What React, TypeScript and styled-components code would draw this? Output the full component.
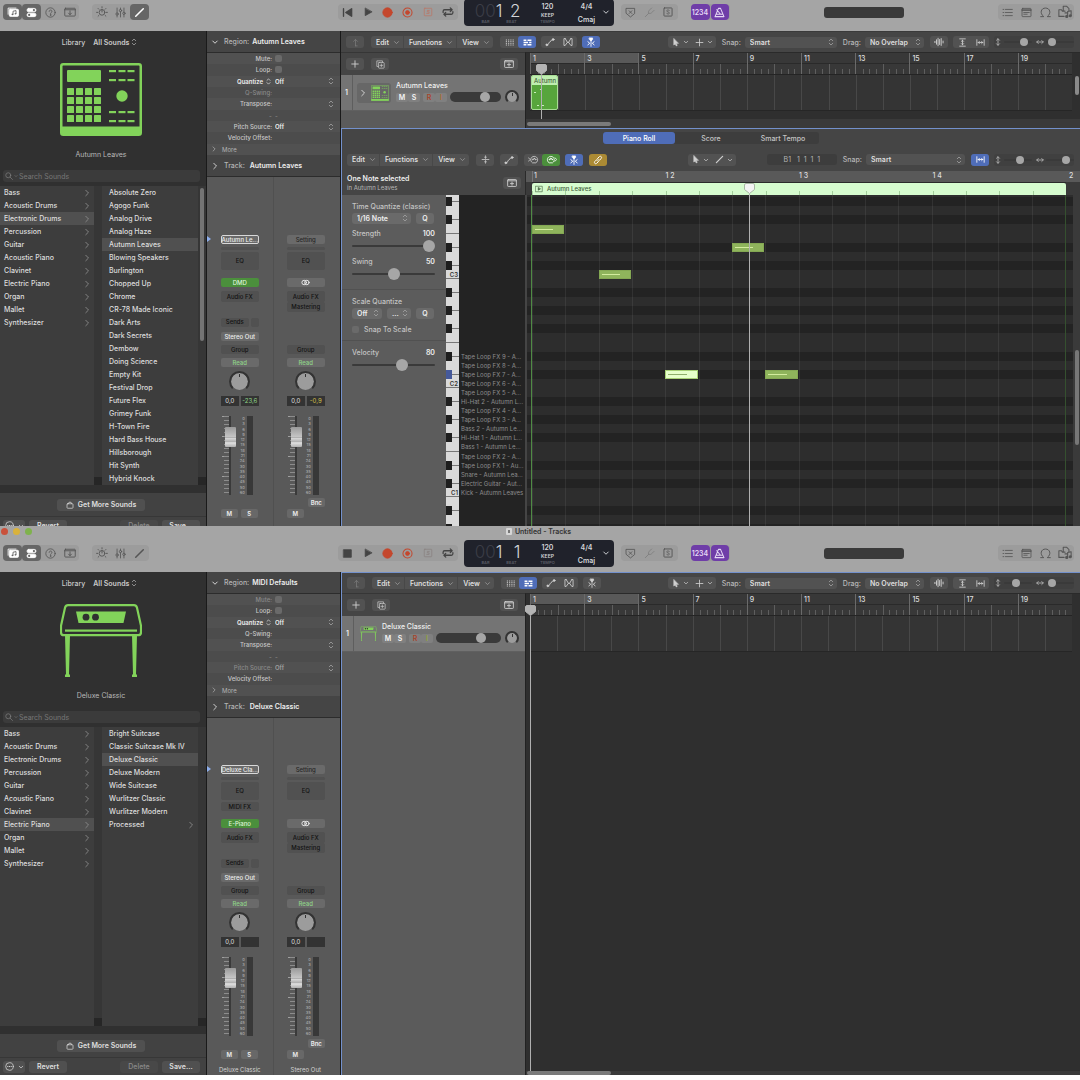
import React, { useId } from "react";
import type { ReactNode } from "react";
import styled, { createGlobalStyle, css } from "styled-components";

const c = {
  chrome: "#a5a5a5",
  chromeGroup: "#9c9c9c",
  ink: "#555",
  dark: "#303030",
  list: "#3d3d3d",
  bar: "#454545",
  control: "#525252",
  mixer: "#595959",
  text: "#dedede",
  muted: "#a8a8a8",
  blue: "#4f6db8",
  focus: "#7391cc",
  green: "#4b8f3c",
  lime: "#82d35a",
  purple: "#6f3da8",
};

const GlobalStyle = createGlobalStyle`
  *, *::before, *::after { box-sizing: border-box; }
  body { margin: 0; background: #fff; font-family: Inter, "Liberation Sans", sans-serif; font-size: 7px; line-height: 9px; color: ${c.text}; }
  button, input, select { font: inherit; color: inherit; margin: 0; padding: 0; border: 0; background: none; }
  button { display: flex; align-items: center; justify-content: center; white-space: nowrap; }
  ul { list-style: none; margin: 0; padding: 0; }
  h1, h2, p { margin: 0; font-size: inherit; font-weight: inherit; }
  svg { display: block; flex: none; }
`;

/* ---------- icons ---------- */

const glyphs: Record<string, ReactNode> = {
  library: (
    <>
      <path d="M1.5 11V2.8h10.5" />
      <rect x="3.2" y="4.4" width="12" height="9.4" rx="1" fill="currentColor" />
      <path d="M8 11.2V7l4-.9v4.2" stroke="#666" strokeWidth="1.2" />
      <circle cx="7.2" cy="11.2" r="1.1" fill="#666" stroke="none" />
      <circle cx="11.2" cy="10.4" r="1.1" fill="#666" stroke="none" />
    </>
  ),
  inspector: (
    <>
      <rect x="1.5" y="2" width="13" height="5" rx="2.5" fill="currentColor" />
      <rect x="1.5" y="9" width="13" height="5" rx="2.5" fill="currentColor" />
      <circle cx="11.5" cy="4.5" r="1.6" fill="#666" stroke="none" />
      <circle cx="4.6" cy="11.5" r="1.6" fill="#666" stroke="none" />
    </>
  ),
  help: (
    <>
      <circle cx="8" cy="8" r="6.8" />
      <path d="M6 6.4c0-2.8 4.1-2.6 4.1 0 0 1.6-2.1 1.5-2.1 3" />
      <circle cx="8" cy="11.6" r=".5" fill="currentColor" />
    </>
  ),
  tray: (
    <>
      <rect x="1" y="3" width="14" height="10.4" rx="1" />
      <path d="M1 5h14M8 6.5v5M6 9.5l2 2 2-2" />
    </>
  ),
  dial: (
    <>
      <circle cx="8" cy="8.5" r="3.8" />
      <path d="M8 8V5M8 1v1.5M2.8 3.3l1 1M13.2 3.3l-1 1M.8 8.5h1.5M13.7 8.5h1.5M2.8 13.6l1-1M13.2 13.6l-1-1" />
    </>
  ),
  mixer: (
    <>
      <path d="M3 1.5v7M3 12v2.5M8 1.5v2M8 7v7.5M13 1.5v6M13 11v3.5" />
      <circle cx="3" cy="10.2" r="1.7" />
      <circle cx="8" cy="5.2" r="1.7" />
      <circle cx="13" cy="9.2" r="1.7" />
    </>
  ),
  pencil: <path d="M2.5 13.5 13.5 2.5" strokeWidth="2.2" />,
  start: (
    <g fill="currentColor">
      <path d="M14 2.5v11L5.5 8zM2.2 2.5v11" strokeWidth="2" />
    </g>
  ),
  stop: <rect x="2.5" y="2.5" width="11" height="11" fill="currentColor" />,
  play: <path d="M3.5 2.2v11.6L14 8z" fill="currentColor" />,
  record: <circle cx="8" cy="8" r="6.8" fill="currentColor" />,
  capture: (
    <>
      <circle cx="8" cy="8" r="6.6" strokeWidth="1.5" />
      <circle cx="8" cy="8" r="2.8" fill="currentColor" />
    </>
  ),
  replace: (
    <>
      <rect x="2" y="2" width="12" height="12" rx="1" />
      <path d="M10 5.5H7v2.3h2.7v2.5H6" />
    </>
  ),
  cycle: (
    <g strokeWidth="1.7">
      <path d="M1.5 8.5V7q0-2 2-2h10M11 2.5l2.5 2.5L11 7.5M14.5 7.5V9q0 2-2 2h-10M5 8.5 2.5 11 5 13.5" />
    </g>
  ),
  shield: (
    <>
      <path d="M2 2h12v7.5L8 14.5 2 9.5z" />
      <path d="M6 5.5l4 4M10 5.5l-4 4" />
    </>
  ),
  fork: <path d="M2 14l5-5M7 9c-1.5-2 0-3.5 2-5.5l2-2M7 9c2 1.5 3.5 0 5.5-2l2-2" />,
  solo: (
    <>
      <rect x="1.5" y="1.5" width="13" height="13" rx="1" strokeWidth="1.5" />
      <path d="M10.3 5.8c-.5-1.6-4.4-1.6-4.4.5 0 2 4.4 1.2 4.4 3.3 0 2.1-4 2.2-4.6.4" />
    </>
  ),
  metronome: (
    <g strokeWidth="1.5">
      <path d="M6.5 2h3L14.5 14h-13zM4 10.5h8.5M9.500 10.500 4 4" />
    </g>
  ),
  list: <path d="M5 3.5h10M5 8h10M5 12.5h10M1.5 3.5h1.2M1.5 8h1.2M1.5 12.5h1.2" />,
  note: (
    <>
      <rect x="1.5" y="2" width="13" height="12" rx="1" />
      <path d="M1.5 4h13M1.5 5h13M4 8h8M4 10.5h5" />
    </>
  ),
  loop: <path d="M1 14h4.5C-1 9 1.5 1.5 8 1.5S17 9 10.5 14H15" strokeWidth="1.4" />,
  browser: (
    <>
      <path d="M1 13V5.5h3l1 1.5h3M1 13h6M6 6V1.5h4L12.5 4v2.5M8 9h3" />
      <path d="M11 13V7.5l4-1V12" />
      <circle cx="10" cy="13" r="1.2" fill="currentColor" />
      <circle cx="14" cy="12.3" r="1.2" fill="currentColor" />
    </>
  ),
  up: <path d="M8 14V3M4.5 6 8 2.5 11.5 6M8 14h3" />,
  down: <path d="M3.5 6 8 10.5 12.5 6" strokeWidth="1.9" />,
  right: <path d="M5.5 2.5 11 8l-5.5 5.5" strokeWidth="1.8" />,
  updown: <path d="M4.5 5.5 8 2l3.500 3.500M4.500 10.500 8 14l3.500-3.500" strokeWidth="1.5" />,
  grid: (
    <path
      d="M1.5 3.5h2M5.5 3.5h2M9.5 3.5h2M13.5 3.5h2M1.5 6.5h2M5.5 6.5h2M9.5 6.5h2M13.5 6.5h2M1.5 9.5h2M5.5 9.5h2M9.5 9.5h2M13.5 9.5h2M1.5 12.5h2M5.5 12.5h2M9.5 12.5h2M13.5 12.5h2"
      strokeLinecap="butt"
      strokeWidth="1.7"
    />
  ),
  rows: <path d="M1 4h5M8 4h7M1 8h8M11 8h4M1 12h5M8 12h7" strokeWidth="2.4" strokeLinecap="butt" />,
  automation: (
    <>
      <path d="M2 12.5c5 0 3-3 6-5s2-3.5 6-3.5" strokeWidth="1.6" />
      <circle cx="3" cy="12.5" r="1.5" fill="currentColor" />
      <circle cx="13" cy="4" r="1.5" fill="currentColor" />
    </>
  ),
  flex: <path d="M3.5 2.5h-2v11h2l3.5-5-3.5-6M12.5 2.5h2v11h-2L9 8.5l3.5-6M7 8.5h2" strokeWidth="1.4" />,
  catch: (
    <>
      <path d="M8 5v10" strokeWidth="1.4" />
      <path d="M5.5 1.5h5V4L8 6.5 5.5 4z" fill="currentColor" />
      <path d="M3 7.5 6 10l-3 2.5M13 7.5 10 10l3 2.5" strokeWidth="1.5" />
    </>
  ),
  pointer: <path d="M5 1.5v11l2.5-2.3L9.2 14l1.8-.8L9.3 9.5h3.4z" fill="currentColor" />,
  marquee: <path d="M8 2v4M8 10v4M2 8h4M10 8h4M7 8h2M8 7v2" strokeWidth="1.5" />,
  wave: <path d="M1.5 7v2M4 4.5v7M6.5 2v12M9 4v8M11.5 2.5v11M14.5 6.5v3" strokeWidth="1.5" />,
  vzoom: <path d="M3 1.5h10M3 14.5h10M8 4v8M6 6l2-2 2 2M6 10l2 2 2-2" strokeWidth="1.5" />,
  hzoom: <path d="M1.5 3v10M14.5 3v10M4 8h8M6 6 4 8l2 2M10 6l2 2-2 2" strokeWidth="1.5" />,
  vert: <path d="M8 1.5v13M5 4.5l3-3 3 3M5 11.5l3 3 3-3" strokeWidth="1.8" />,
  horiz: <path d="M1.5 8h13M4.5 5l-3 3 3 3M11.5 5l3 3-3 3" strokeWidth="1.8" />,
  plus: <path d="M8 1.5v13M1.5 8h13" strokeWidth="1.8" />,
  duplicate: (
    <>
      <path d="M4 11.5H1.5v-10h10V4" />
      <rect x="4.5" y="4.5" width="10" height="10" rx="1" />
      <path d="M9.5 7v5M7 9.5h5" />
    </>
  ),
  panel: (
    <>
      <rect x="1" y="2.5" width="14" height="11" rx="1" strokeWidth="1.4" />
      <path d="M1 4.5h14M8 6.5v5M5.5 9h5" strokeWidth="1.4" />
    </>
  ),
  collapse: <path d="M2 8h12M8 1.5v4M6.3 4 8 5.5 9.7 4M8 14.5v-4M6.3 12 8 10.5 9.7 12" strokeWidth="1.4" />,
  midiIn: (
    <>
      <path d="M.8 5.5 3 8 .8 10.5M6 12.5c-4-3-2-9 3-9s7 6 3 9z" />
      <circle cx="7" cy="8" r=".6" />
      <circle cx="9" cy="6.5" r=".6" />
      <circle cx="11" cy="8" r=".6" />
    </>
  ),
  midiOut: (
    <>
      <path d="M13.2 5.5 15.4 8l-2.2 2.5M4 12.5c-4-3-2-9 3-9s7 6 3 9z" />
      <circle cx="5" cy="8" r=".6" />
      <circle cx="7" cy="6.5" r=".6" />
      <circle cx="9" cy="8" r=".6" />
    </>
  ),
  link: (
    <g strokeWidth="1.6">
      <path d="M7 9.5c-1.2-1.2-1.2-2.5 0-3.7l3-3c2.2-2.2 5.2.8 3 3l-1.5 1.5" />
      <path d="M9 6.5c1.2 1.2 1.2 2.5 0 3.7l-3 3c-2.2 2.2-5.2-.8-3-3l1.5-1.5" />
    </g>
  ),
  stereo: (
    <>
      <circle cx="5.6" cy="8" r="4" strokeWidth="1.6" />
      <circle cx="10.4" cy="8" r="4" strokeWidth="1.6" />
    </>
  ),
  search: (
    <>
      <circle cx="6.5" cy="6.5" r="5" />
      <path d="M10.3 10.3 15 15" />
    </>
  ),
  bag: (
    <>
      <rect x="2" y="5.5" width="12" height="9" rx="1.5" strokeWidth="1.4" />
      <path d="M4.5 5.5l1.5-3h4l1.5 3" strokeWidth="1.4" />
    </>
  ),
  more: (
    <>
      <circle cx="8" cy="8" r="6.8" strokeWidth="1.3" />
      <path d="M4.8 8h.4M7.8 8h.4M10.8 8h.4" strokeWidth="1.8" />
    </>
  ),
  region: (
    <>
      <rect x="1.5" y="2.5" width="13" height="11" />
      <path d="M6.5 5.5v5l4-2.5z" fill="currentColor" />
    </>
  ),
};

const Icon = ({ name, size = 10 }: { name: string; size?: number }) => (
  <svg
    width={size}
    height={size}
    viewBox="0 0 16 16"
    fill="none"
    stroke="currentColor"
    strokeWidth="1.2"
    strokeLinecap="round"
    strokeLinejoin="round"
    aria-hidden="true"
  >
    {glyphs[name]}
  </svg>
);

const DrumMachine = ({ width, height }: { width: number; height: number }) => (
  <svg width={width} height={height} viewBox="0 0 82 73" fill={c.lime} aria-hidden="true">
    <rect x="1.25" y="1.25" width="79.5" height="70.5" rx="2" fill="none" stroke={c.lime} strokeWidth="2.5" />
    <rect x="1" y="63.5" width="80" height="8.5" />
    <rect x="7" y="7" width="34" height="12" rx="1" />
    {[0, 1, 2, 3].map((r) =>
      [0, 1, 2, 3].map((k) => <rect key={`${r}${k}`} x={7 + k * 9} y={25 + r * 9} width="7" height="7" rx=".6" />)
    )}
    {[7, 16, 48, 57].map((y) => [49, 58.5, 67.5].map((x) => <rect key={`${x}-${y}`} x={x} y={y} width="7" height="2.2" />))}
    <circle cx="62" cy="33" r="5.7" />
  </svg>
);

const StagePiano = ({ width, height }: { width: number; height: number }) => (
  <svg width={width} height={height} viewBox="0 0 82 73" fill={c.lime} aria-hidden="true">
    <path
      d="M8 1.2h66c2 0 2.5 1 3 2.5l4 18v6.5c0 2-1 3-3 3H4c-2 0-3-1-3-3v-6.5l4-18C5.5 2.2 6 1.2 8 1.2z"
      fill="none"
      stroke={c.lime}
      strokeWidth="2.2"
    />
    <path d="M16 7.5h50L63.5 19h-45z" />
    <rect x="5" y="25.5" width="72" height="2.2" />
    <circle cx="26" cy="13.2" r="3.4" fill={c.dark} />
    <circle cx="35.5" cy="13.2" r="3.4" fill={c.dark} />
    <path d="M5 31h5l-1 39.5h1V73H5v-2.5h1zM72 31h5l-1 39.5h1V73h-5v-2.5h1z" />
  </svg>
);

/* ---------- window chrome ---------- */

const Page = styled.main`
  display: flex;
  flex-direction: column;
`;

const WindowFrame = styled.section<{ $front?: boolean }>`
  position: relative;
  isolation: isolate;
  background: ${c.chrome};
  overflow: hidden;
  ${(p) =>
    p.$front &&
    css`
      margin-top: -8px;
    `}
`;

const TitleBar = styled.header`
  display: grid;
  grid-template-columns: 1fr auto 1fr;
  align-items: center;
  height: 15px;
  padding: 0 4px 4px 1px;
  color: #333;
  font-weight: 600;
`;

const Lights = styled.div`
  display: flex;
  gap: 5px;
`;

const Light = styled.button<{ $color: string }>`
  width: 7px;
  height: 7px;
  border-radius: 50%;
  background: ${(p) => p.$color};
`;

const WindowTitle = styled.h1`
  display: flex;
  align-items: center;
  gap: 3px;
`;

const DocIcon = styled.span`
  width: 6px;
  height: 7px;
  border: 2px solid #d6d6d6;
  border-radius: 1px;
  background: #777;
`;

const MainBar = styled.div`
  display: flex;
  align-items: center;
  height: 31px;
  padding: 0 6px 7px 3px;
  color: ${c.ink};
`;

const Spring = styled.span<{ $grow: number }>`
  flex: ${(p) => p.$grow} 1 0;
`;

const ToolGroup = styled.div<{ $ml?: number }>`
  display: flex;
  margin-left: ${(p) => p.$ml ?? 0}px;
  border-radius: 4px;
  background: ${c.chromeGroup};
`;

const ToolButton = styled.button<{ $on?: boolean; $w?: number; $color?: string }>`
  width: ${(p) => p.$w ?? 19}px;
  height: 16px;
  border-radius: 4px;
  color: ${(p) => (p.$on ? "#fff" : p.$color ?? "inherit")};
  background: ${(p) => (p.$on ? "#666" : "transparent")};
`;

const PurpleButton = styled(ToolButton)`
  color: #e6d8f5;
  background: ${c.purple};
  font-weight: 600;
  margin-right: 1px;
`;

const Lcd = styled.div`
  display: grid;
  grid-template-columns: 34px 18px 54px 24px 15px;
  flex: none;
  height: 27px;
  margin: 0 7px 0 6px;
  padding-left: 5px;
  border-radius: 4px;
  background: #20222b;
  color: #d4d6da;
  text-align: center;
`;

const LcdCell = styled.div`
  display: flex;
  flex-direction: column;
  justify-content: space-between;
  padding: 3px 0 2px;
  font-weight: 600;
`;

const LcdDigits = styled.span`
  font-size: 17px;
  line-height: 18px;
  font-weight: 300;
  text-align: right;
`;

const LcdDim = styled.span`
  color: #3b3d46;
`;

const LcdKeep = styled.span`
  font-size: 5px;
  line-height: 6px;
`;

const LcdLabel = styled.span`
  color: #5a5c66;
  font-size: 4px;
  line-height: 4px;
`;

const LcdSelect = styled.button`
  color: #d4d6da;
`;

const LevelBar = styled.div`
  width: 80px;
  height: 11px;
  border-radius: 3px;
  background: #3a3a3a;
`;

const Body = styled.div`
  display: grid;
  grid-template-columns: 207px 134px 1fr;
  background: ${c.dark};
`;

/* ---------- shared controls ---------- */

const SelectBox = styled.span<{ $w?: number; $bare?: boolean; $pad?: number; $h?: number }>`
  display: inline-grid;
  grid-template-columns: 1fr;
  align-items: center;
  width: ${(p) => (p.$w ? `${p.$w}px` : "auto")};
  height: ${(p) => p.$h ?? 11}px;
  border-radius: 3px;
  background: ${(p) => (p.$bare ? "transparent" : c.control)};
  > * {
    grid-area: 1 / 1;
  }
  > svg {
    justify-self: end;
    margin-right: 2px;
    pointer-events: none;
    color: ${c.muted};
  }
  > select {
    appearance: none;
    width: 100%;
    padding-left: ${(p) => p.$pad ?? 5}px;
    font-weight: 600;
    outline: none;
  }
`;

type PickProps = { id?: string; label?: string; value: string; w?: number; bare?: boolean; pad?: number; h?: number };
const Pick = ({ id, label, value, w, bare, pad, h }: PickProps) => (
  <SelectBox $w={w} $bare={bare} $pad={pad} $h={h}>
    <select id={id} aria-label={label} defaultValue={value}>
      <option>{value}</option>
    </select>
    <Icon name="updown" size={8} />
  </SelectBox>
);

const Range = styled.input.attrs({ type: "range" })<{ $thumb: number; $line?: number }>`
  appearance: none;
  display: block;
  width: 100%;
  height: ${(p) => p.$thumb}px;
  outline: none;
  &::-webkit-slider-runnable-track {
    height: ${(p) => p.$line ?? 2}px;
    border-radius: 5px;
    background: #3a3a3a;
  }
  &::-webkit-slider-thumb {
    appearance: none;
    width: ${(p) => p.$thumb}px;
    height: ${(p) => p.$thumb}px;
    margin-top: ${(p) => ((p.$line ?? 2) - p.$thumb) / 2}px;
    border-radius: 50%;
    background: #a6a6a6;
  }
`;

const KnobRing = styled.button<{ $size: number }>`
  position: relative;
  width: ${(p) => p.$size}px;
  height: ${(p) => p.$size}px;
  border-radius: 50%;
  border: 2px solid #333;
  border-bottom-color: transparent;
  background: #9c9c9c;
  background-clip: padding-box;
  align-items: flex-start;
  &::before {
    content: "";
    width: 1px;
    height: 3px;
    margin-top: 1px;
    background: #333;
  }
`;

/* ---------- library ---------- */

const LibraryPane = styled.aside`
  display: flex;
  flex-direction: column;
  border-right: 1px solid #1a1a1a;
  background: ${c.dark};
`;

const LibraryHead = styled.div`
  display: flex;
  align-items: center;
  justify-content: center;
  gap: 4px;
  height: 22px;
  padding-right: 4px;
  font-weight: 500;
  color: #cacaca;
`;

const Artwork = styled.div`
  display: flex;
  flex-direction: column;
  align-items: center;
  justify-content: space-between;
  height: 117px;
  padding: 10px 4px 11px 0;
  color: #b8b8b8;
`;

const SearchBox = styled.label`
  display: flex;
  align-items: center;
  gap: 1px;
  height: 12px;
  margin: 0 6px 4px 3px;
  padding-left: 2px;
  border-radius: 3px;
  background: #3b3b3b;
  color: #8a8a8a;
  > input {
    flex: 1;
    min-width: 0;
    outline: none;
    &::placeholder {
      color: #777;
      opacity: 1;
    }
  }
`;

const Columns = styled.div`
  display: grid;
  grid-template-columns: 94px 8px 1fr 8px;
  height: 299px;
`;

const ListColumn = styled.ul`
  background: ${c.list};
`;

const ScrollRail = styled.div`
  display: flex;
  flex-direction: column;
  justify-content: space-between;
  background: #363636;
  border-bottom: 8px solid #262626;
`;

const RailThumb = styled.span<{ $h: number }>`
  width: 4px;
  height: ${(p) => p.$h}px;
  margin: 2px auto 0;
  border-radius: 2px;
  background: #747474;
`;

const ListItem = styled.button<{ $on?: boolean; $pad: number }>`
  justify-content: space-between;
  width: 100%;
  height: 13px;
  padding: 0 3px 0 ${(p) => p.$pad}px;
  font-weight: 500;
  background: ${(p) => (p.$on ? "#505050" : "transparent")};
  > svg {
    color: #8a8a8a;
  }
`;

const StoreRow = styled.div`
  display: flex;
  align-items: center;
  justify-content: center;
  height: 24px;
  margin-top: 8px;
  padding-right: 4px;
  border-bottom: 1px solid #373737;
  background: #424242;
`;

const PanelButton = styled.button<{ $w?: number; $ml?: string }>`
  gap: 4px;
  width: ${(p) => (p.$w ? `${p.$w}px` : "auto")};
  height: 12px;
  margin-left: ${(p) => p.$ml ?? "0"};
  padding: 0 2px;
  border-radius: 3px;
  background: #505050;
  font-weight: 600;
  &:disabled {
    background: #484848;
    color: #8a8a8a;
    font-weight: 500;
  }
`;

const LibraryFoot = styled.div`
  display: flex;
  align-items: center;
  gap: 4px;
  height: 17px;
  padding: 0 6px 0 3px;
  background: #424242;
`;

const categories = [
  "Bass",
  "Acoustic Drums",
  "Electronic Drums",
  "Percussion",
  "Guitar",
  "Acoustic Piano",
  "Clavinet",
  "Electric Piano",
  "Organ",
  "Mallet",
  "Synthesizer",
];

type LibraryProps = { art: ReactNode; patch: string; category: string; patches: string[]; folder?: string; thumb?: number };
const Library = ({ art, patch, category, patches, folder, thumb }: LibraryProps) => (
  <LibraryPane>
    <LibraryHead>
      Library
      <Pick label="Sound filter" value="All Sounds" w={51} bare pad={4} />
    </LibraryHead>
    <Artwork>
      {art}
      <p>{patch}</p>
    </Artwork>
    <SearchBox>
      <Icon name="search" size={8} />
      <Icon name="down" size={4} />
      <input type="search" placeholder="Search Sounds" aria-label="Search Sounds" />
    </SearchBox>
    <Columns>
      <ListColumn>
        {categories.map((name) => (
          <li key={name}>
            <ListItem $pad={4} $on={name === category}>
              {name}
              <Icon name="right" size={8} />
            </ListItem>
          </li>
        ))}
      </ListColumn>
      <ScrollRail />
      <ListColumn>
        {patches.map((name) => (
          <li key={name}>
            <ListItem $pad={7} $on={name === patch}>
              {name}
              {name === folder && <Icon name="right" size={8} />}
            </ListItem>
          </li>
        ))}
      </ListColumn>
      <ScrollRail>{thumb && <RailThumb $h={thumb} />}</ScrollRail>
    </Columns>
    <StoreRow>
      <PanelButton $w={88}>
        <Icon name="bag" size={8} />
        Get More Sounds
      </PanelButton>
    </StoreRow>
    <LibraryFoot>
      <PanelButton $w={22} aria-label="Library actions">
        <Icon name="more" size={9} />
        <Icon name="down" size={6} />
      </PanelButton>
      <PanelButton $w={38}>Revert</PanelButton>
      <PanelButton $w={38} $ml="auto" disabled>
        Delete
      </PanelButton>
      <PanelButton $w={38}>Save...</PanelButton>
    </LibraryFoot>
  </LibraryPane>
);

/* ---------- inspector and channel strips ---------- */

const InspectorPane = styled.aside`
  display: flex;
  flex-direction: column;
  border-right: 1px solid #1a1a1a;
  background: ${c.mixer};
`;

const SectionHead = styled.h2`
  display: flex;
  align-items: center;
  gap: 5px;
  height: 22px;
  padding-left: 4px;
  border-bottom: 1px solid #2c2c2c;
  background: ${c.bar};
  color: #b4b4b4;
  font-weight: 500;
  > svg {
    color: #dcdcdc;
  }
`;

const Strong = styled.span`
  color: #ededed;
  font-weight: 600;
  margin-left: -2px;
`;

const Params = styled.div`
  display: grid;
  grid-auto-rows: 1fr;
  height: 102px;
  background: #515151;
  font-size: 6px;
`;

const Param = styled.div<{ $dim?: boolean; $bold?: boolean }>`
  display: grid;
  grid-template-columns: 65px 1fr;
  gap: 3px;
  align-items: center;
  padding-right: 3px;
  color: ${(p) => (p.$dim ? "#8a8a8a" : p.$bold ? "#f0f0f0" : "#c9c9c9")};
  font-weight: ${(p) => (p.$bold ? 600 : 500)};
  &:nth-child(even) {
    background: #4c4c4c;
  }
  > label {
    display: flex;
    justify-content: flex-end;
    align-items: center;
    gap: 2px;
  }
  select {
    color: ${(p) => (p.$dim ? "#a0a0a0" : "#f0f0f0")};
  }
`;

const Tick = styled.input.attrs({ type: "checkbox" })`
  appearance: none;
  width: 7px;
  height: 7px;
  border-radius: 2px;
  background: #6a6a6a;
`;

const Field = styled.input`
  width: 100%;
  outline: none;
`;

const MoreToggle = styled.button`
  gap: 5px;
  justify-content: flex-start;
  padding-left: 4px;
  color: #b4b4b4;
`;

const Dots = styled.span`
  grid-column: 1 / -1;
  padding-left: 62px;
  color: #888;
`;

type ParamRow = { label: string; kind: "check" | "pick" | "text" | "stepper"; dim?: boolean; bold?: boolean };
const ParamLine = ({ row }: { row: ParamRow }) => {
  const id = useId();
  return (
    <Param $dim={row.dim} $bold={row.bold}>
      <label htmlFor={id}>
        {row.label}
        {row.bold && <Icon name="updown" size={7} />}
      </label>
      {row.kind === "check" && <Tick id={id} />}
      {row.kind === "pick" && <Pick id={id} value="Off" bare pad={0} h={10} />}
      {row.kind === "text" && <Field id={id} />}
      {row.kind === "stepper" && (
        <SelectBox $bare $pad={0} $h={10}>
          <Field id={id} />
          <Icon name="updown" size={8} />
        </SelectBox>
      )}
    </Param>
  );
};

const Strips = styled.div`
  display: grid;
  grid-template-columns: 1fr 1fr;
  flex: 1;
  padding-right: 2px;
  font-size: 6px;
`;

const Strip = styled.div`
  position: relative;
  display: flex;
  flex-direction: column;
  align-items: center;
  justify-content: flex-end;
  & + & {
    border-left: 1px solid #505050;
  }
`;

const FocusMark = styled.span<{ $top: number }>`
  position: absolute;
  left: 0;
  top: ${(p) => p.$top}px;
  border: 3px solid transparent;
  border-left: 4px solid #8fb0ee;
  border-right: 0;
`;

const slotTones = {
  plain: css`
    background: #6a6a6a;
    color: #262626;
  `,
  light: css`
    background: #6a6a6a;
    color: #eee;
  `,
  active: css`
    border: 1px solid #d8d8d8;
    background: #6a6a6a;
    color: #eee;
  `,
  empty: css`
    background: #515151;
    color: #121212;
  `,
  green: css`
    background: ${c.green};
    color: #dff3d8;
  `,
  read: css`
    background: #6a6a6a;
    color: #8fd389;
  `,
};

const Slot = styled.button<{ $tone: keyof typeof slotTones; $gap: number; $h?: number; $w?: number; $hide?: boolean }>`
  flex: none;
  width: ${(p) => p.$w ?? 38}px;
  height: ${(p) => p.$h ?? 9}px;
  margin-top: ${(p) => p.$gap}px;
  border-radius: 2px;
  line-height: 8px;
  font-weight: 500;
  ${(p) => slotTones[p.$tone]}
  ${(p) => p.$hide && "visibility: hidden;"}
`;

const EffectSlots = styled.div`
  display: flex;
  flex-direction: column;
  height: 26px;
  margin-top: 4px;
`;

const StripRow = styled.div<{ $gap: number; $h: number; $end?: boolean }>`
  display: flex;
  justify-content: ${(p) => (p.$end ? "flex-end" : "flex-start")};
  align-items: center;
  gap: 2px;
  flex: none;
  width: 38px;
  height: ${(p) => p.$h}px;
  margin-top: ${(p) => p.$gap}px;
`;

const CenterRow = styled(StripRow)`
  justify-content: center;
`;

const Readout = styled.span<{ $color?: string }>`
  flex: 1;
  height: 10px;
  line-height: 10px;
  background: #333;
  color: ${(p) => p.$color ?? "#e0e0e0"};
  text-align: center;
  white-space: nowrap;
`;

const MiniButton = styled.button<{ $w?: number }>`
  width: ${(p) => p.$w ?? 17}px;
  height: 9px;
  border-radius: 2px;
  background: #686868;
  color: #eee;
  font-weight: 600;
  & + & {
    margin-left: 1px;
  }
`;

const FaderArea = styled.div`
  display: grid;
  grid-template-columns: 16px 8px 2px 6px;
  flex: none;
  width: 38px;
  height: 79px;
  margin-top: 10px;
`;

const FaderTicks = styled.div`
  grid-area: 1 / 1;
  width: 9px;
  margin-left: 1px;
  border-right: 2px solid #3a3a3a;
  background: repeating-linear-gradient(to bottom, #8c8c8c 0 1px, transparent 1px 4px) right / 5px 100% no-repeat,
    repeating-linear-gradient(to bottom, #a0a0a0 0 1px, transparent 1px 20px);
`;

const Fader = styled.input.attrs({ type: "range" })`
  grid-area: 1 / 1;
  appearance: none;
  writing-mode: vertical-lr;
  direction: rtl;
  width: 11px;
  height: 79px;
  margin-left: 4px;
  outline: none;
  z-index: 1;
  &::-webkit-slider-thumb {
    appearance: none;
    width: 11px;
    height: 20px;
    border-radius: 1px;
    background: linear-gradient(#9a9a9a, #c4c4c4 48%, #666 50%, #dcdcdc 54%, #aaa 76%, #e4e4e4 78%, #b0b0b0);
  }
`;

const FaderScale = styled.div`
  display: flex;
  flex-direction: column;
  justify-content: space-between;
  color: #a8a8a8;
  font-size: 4px;
  font-weight: 500;
  line-height: 5px;
  text-align: right;
`;

const Meter = styled.div`
  grid-column: 4;
  background: #383838;
`;

const StripName = styled.p`
  flex: none;
  margin-top: 4px;
  height: 12px;
  line-height: 14px;
  color: #d0d0d0;
`;

type StripProps = {
  name: string;
  setting: string;
  selected?: boolean;
  midi?: boolean;
  instrument?: string;
  peak?: string;
  peakColor?: string;
};
const ChannelStrip = ({ name, setting, selected, midi, instrument, peak, peakColor }: StripProps) => (
  <Strip>
    {selected && <FocusMark $top={midi ? 48 : 59} />}
    <Slot $tone={selected ? "active" : "plain"} $gap={0}>
      {setting}
    </Slot>
    <Slot $tone="empty" $gap={3} $h={3} aria-label="Gain reduction" />
    <Slot $tone="empty" $gap={2} $h={18}>
      EQ
    </Slot>
    {midi && (
      <Slot $tone="empty" $gap={2} $hide={!selected}>
        MIDI FX
      </Slot>
    )}
    <Slot $tone={instrument ? "green" : "light"} $gap={8} aria-label={instrument ?? "Stereo"}>
      {instrument ?? <Icon name="stereo" size={9} />}
    </Slot>
    <EffectSlots>
      <Slot $tone="empty" $gap={0} $h={11}>
        Audio FX
      </Slot>
      {!selected && (
        <Slot $tone="empty" $gap={0} $h={10}>
          Mastering
        </Slot>
      )}
    </EffectSlots>
    <StripRow $gap={0} $h={10}>
      {selected && (
        <>
          <Slot $tone="empty" $gap={0} $w={28}>
            Sends
          </Slot>
          <Slot $tone="empty" $gap={0} $w={8} aria-label="Send level" />
        </>
      )}
    </StripRow>
    <Slot $tone="light" $gap={5} $hide={!selected}>
      Stereo Out
    </Slot>
    <Slot $tone="empty" $gap={4}>
      Group
    </Slot>
    <Slot $tone="read" $gap={4}>
      Read
    </Slot>
    <CenterRow $gap={4} $h={21}>
      <KnobRing $size={21} aria-label="Pan" />
    </CenterRow>
    <StripRow $gap={3} $h={11}>
      <Readout>0,0</Readout>
      <Readout $color={peakColor}>{peak}</Readout>
    </StripRow>
    <FaderArea>
      <FaderTicks />
      <Fader defaultValue={82} aria-label={`${name} volume`} />
      <FaderScale>
        {[0, 3, 6, 9, 12, 15, 18, 21, 24, 30, 35, 40, 45, 50, 60].map((n) => (
          <span key={n}>{n}</span>
        ))}
      </FaderScale>
      <Meter />
    </FaderArea>
    <StripRow $gap={3} $h={9} $end>
      {!selected && <MiniButton>Bnc</MiniButton>}
    </StripRow>
    <StripRow $gap={2} $h={9}>
      <MiniButton>M</MiniButton>
      {selected && <MiniButton>S</MiniButton>}
    </StripRow>
    <StripName>{name}</StripName>
  </Strip>
);

/* ---------- tracks area ---------- */

const TracksPane = styled.section<{ $focus?: boolean }>`
  display: flex;
  flex-direction: column;
  min-width: 0;
  border-top: 1px solid ${(p) => (p.$focus ? c.focus : "#3a3a3a")};
  border-left: ${(p) => (p.$focus ? `1px solid ${c.focus}` : "0")};
  background: ${c.bar};
`;

const PaneBar = styled.div<{ $h?: number }>`
  display: flex;
  align-items: center;
  flex: none;
  height: ${(p) => p.$h ?? 20}px;
  padding: 0 6px 0 5px;
`;

const Cluster = styled.div<{ $ml?: string }>`
  display: flex;
  flex: none;
  margin-left: ${(p) => p.$ml ?? "0"};
  border-radius: 3px;
  background: ${c.control};
`;

const MenuButton = styled.button<{ $last?: boolean }>`
  gap: 4px;
  height: 12px;
  padding: 0 3px 0 5px;
  border-right: ${(p) => (p.$last ? "0" : "1px solid #484848")};
  font-weight: 600;
  > svg {
    color: #999;
  }
`;

const SmallButton = styled.button<{ $on?: string; $w?: number }>`
  gap: 3px;
  width: ${(p) => p.$w ?? 18}px;
  height: 12px;
  border-radius: 3px;
  background: ${(p) => p.$on ?? "transparent"};
  color: ${(p) => (p.$on ? "#fff" : "#cfcfcf")};
  &:disabled {
    color: #808080;
  }
`;

const BarLabel = styled.label<{ $ml: string }>`
  margin-left: ${(p) => p.$ml};
  margin-right: 4px;
  color: #b8b8b8;
  font-weight: 500;
  white-space: nowrap;
`;

const ZoomPair = styled.div`
  display: grid;
  grid-template-columns: 10px 28px 4px 10px 28px;
  align-items: center;
  flex: none;
  height: 12px;
  margin-left: 5px;
  border-radius: 3px;
  background: #404040;
  color: #b0b0b0;
`;

const Menus = () => (
  <>
    <MenuButton>
      Edit
      <Icon name="down" size={7} />
    </MenuButton>
    <MenuButton>
      Functions
      <Icon name="down" size={7} />
    </MenuButton>
    <MenuButton $last>
      View
      <Icon name="down" size={7} />
    </MenuButton>
  </>
);

const Zooms = ({ v, h }: { v: number; h: number }) => (
  <ZoomPair>
    <Icon name="vert" size={8} />
    <Range $thumb={8} defaultValue={v} aria-label="Vertical zoom" />
    <span />
    <Icon name="horiz" size={8} />
    <Range $thumb={8} defaultValue={h} aria-label="Horizontal zoom" />
  </ZoomPair>
);

const TracksBar = ({ caught, v, h }: { caught?: boolean; v: number; h: number }) => {
  const snap = useId();
  const drag = useId();
  return (
    <PaneBar>
      <Cluster>
        <SmallButton disabled aria-label="Up one level">
          <Icon name="up" size={9} />
        </SmallButton>
      </Cluster>
      <Cluster $ml="7px">
        <Menus />
      </Cluster>
      <Cluster $ml="7px">
        <SmallButton aria-label="Live loops grid">
          <Icon name="grid" size={9} />
        </SmallButton>
        <SmallButton $on={c.blue} aria-label="Tracks view">
          <Icon name="rows" size={9} />
        </SmallButton>
      </Cluster>
      <Cluster $ml="5px">
        <SmallButton aria-label="Automation">
          <Icon name="automation" />
        </SmallButton>
        <SmallButton aria-label="Flex">
          <Icon name="flex" />
        </SmallButton>
      </Cluster>
      <Cluster $ml="5px">
        <SmallButton $on={caught ? c.blue : undefined} aria-label="Catch playhead">
          <Icon name="catch" />
        </SmallButton>
      </Cluster>
      <Cluster $ml="auto">
        <SmallButton $w={24} aria-label="Pointer tool">
          <Icon name="pointer" size={9} />
          <Icon name="down" size={6} />
        </SmallButton>
        <SmallButton $w={24} aria-label="Marquee tool">
          <Icon name="marquee" size={9} />
          <Icon name="down" size={6} />
        </SmallButton>
      </Cluster>
      <BarLabel htmlFor={snap} $ml="6px">
        Snap:
      </BarLabel>
      <Pick id={snap} value="Smart" w={92} />
      <BarLabel htmlFor={drag} $ml="6px">
        Drag:
      </BarLabel>
      <Pick id={drag} value="No Overlap" w={59} />
      <Cluster $ml="6px">
        <SmallButton aria-label="Waveform zoom">
          <Icon name="wave" />
        </SmallButton>
      </Cluster>
      <Cluster $ml="5px">
        <SmallButton aria-label="Fit vertically">
          <Icon name="vzoom" size={9} />
        </SmallButton>
        <SmallButton aria-label="Fit horizontally">
          <Icon name="hzoom" size={9} />
        </SmallButton>
      </Cluster>
      <Zooms v={v} h={h} />
    </PaneBar>
  );
};

const Arrange = styled.div<{ $fill?: boolean }>`
  display: grid;
  grid-template-columns: ${(p) => (p.$fill ? 183 : 184)}px 1fr;
  flex: ${(p) => (p.$fill ? 1 : "none")};
`;

const HeaderColumn = styled.div`
  display: flex;
  flex-direction: column;
  background: #5b5b5b;
`;

const HeaderTools = styled.div`
  display: flex;
  align-items: center;
  gap: 7px;
  height: 23px;
  padding: 0 7px 0 5px;
  border-top: 1px solid #363636;
  background: ${c.bar};
`;

const TrackHeader = styled.div`
  display: grid;
  grid-template-columns: 11px auto 1fr;
  height: 36px;
  border-bottom: 1px solid #606060;
  background: #747474;
`;

const TrackNumber = styled.span`
  align-self: center;
  text-align: center;
  color: #eee;
  font-weight: 600;
`;

const TrackIcon = styled.div<{ $boxed?: boolean }>`
  display: flex;
  align-items: center;
  padding: 0 5px 0 ${(p) => (p.$boxed ? 4 : 6)}px;
  border-left: 1px solid #5e5e5e;
  > span {
    display: flex;
    align-items: center;
    gap: 4px;
    height: 20px;
    padding: 0 ${(p) => (p.$boxed ? 2 : 0)}px;
    border-radius: 3px;
    background: ${(p) => (p.$boxed ? "#676767" : "transparent")};
  }
`;

const TrackInfo = styled.div`
  display: flex;
  flex-direction: column;
  justify-content: center;
  padding-right: 6px;
  color: #f0f0f0;
  font-weight: 500;
`;

const TrackControls = styled.div`
  display: flex;
  align-items: center;
  height: 14px;
`;

const TrackButton = styled.button<{ $color?: string; $ml?: number }>`
  width: 12px;
  height: 9px;
  margin-left: ${(p) => p.$ml ?? 0}px;
  border-radius: 2px;
  background: #808080;
  color: ${(p) => p.$color ?? "#f4f4f4"};
  font-weight: 600;
`;

const VolumeWrap = styled.div`
  flex: 1;
  min-width: 0;
  margin: 0 4px 0 3px;
`;

const TimelineColumn = styled.div`
  display: flex;
  flex-direction: column;
  padding-left: 4px;
  padding-right: 8px;
  border-left: 1px solid #222;
  border-top: 1px solid #2a2a2a;
  background: #2f2f2f;
`;

const Timeline = styled.div`
  position: relative;
  flex: 1;
  display: flex;
  flex-direction: column;
`;

const Ruler = styled.div`
  display: grid;
  grid-template-columns: repeat(10, 1fr);
  height: 22px;
  border-bottom: 1px solid #242424;
  background: #383838;
`;

const RulerCell = styled.div<{ $cycle?: boolean }>`
  display: flex;
  flex-direction: column;
  border-left: 1px solid #6a6a6a;
  > b {
    height: 11px;
    padding-left: 2px;
    line-height: 11px;
    border-bottom: 1px solid #2a2a2a;
    background: ${(p) => (p.$cycle ? "#595959" : "transparent")};
    font-weight: 500;
  }
`;

const RulerTicks = styled.div`
  display: grid;
  grid-template-columns: repeat(8, 1fr);
  align-items: end;
  flex: 1;
`;

const RulerTick = styled.i<{ $tall?: boolean }>`
  height: ${(p) => (p.$tall ? 10 : 5)}px;
  border-left: 1px solid #5e5e5e;
  &:first-child {
    border-left: 0;
  }
`;

const Lane = styled.div`
  display: grid;
  grid-template-columns: repeat(20, 1fr);
  height: 36px;
  border-bottom: 1px solid #262626;
  background: #343434;
`;

const LaneBar = styled.div`
  border-left: 1px solid #484848;
`;

const Region = styled.button`
  flex-direction: column;
  align-items: stretch;
  justify-content: flex-start;
  width: 100%;
  height: 35px;
  border: 1px solid #a8dd96;
  border-radius: 2px;
  background: #57a53c;
  color: #2e4a26;
  font-size: 6px;
  text-align: left;
  overflow: hidden;
  > span {
    height: 9px;
    padding-left: 2px;
    background: #bfeeb0;
  }
`;

const Playhead = styled.div<{ $at: number; $top: number; $bottom?: number }>`
  position: absolute;
  top: ${(p) => p.$top}px;
  bottom: ${(p) => p.$bottom ?? 0}px;
  left: ${(p) => p.$at}%;
  width: 9px;
  margin-left: -4px;
  display: flex;
  flex-direction: column;
  align-items: center;
  z-index: 2;
  &::after {
    content: "";
    flex: 1;
    width: 1px;
    background: #b0b0b0;
  }
`;

const PlayheadCap = ({ color, edge }: { color: string; edge: string }) => (
  <svg width="11" height="11" viewBox="0 0 11 11" aria-hidden="true">
    <path d="M.5 2Q.5.5 2 .5h7q1.5 0 1.5 1.5v4.5l-5 4-5-4z" fill={color} stroke={edge} />
  </svg>
);

const BottomScroll = styled.div<{ $h: number }>`
  display: flex;
  align-items: center;
  height: ${(p) => p.$h}px;
  margin: 0 -8px 0 -4px;
  background: #3a3a3a;
  overflow: hidden;
  > span {
    width: 84px;
    height: 4px;
    margin-left: 1px;
    border-radius: 2px;
    background: #7a7a7a;
  }
`;

const LaneGap = styled.div`
  height: 8px;
`;

const ArrangeRail = styled.span`
  position: absolute;
  top: 23px;
  right: -7px;
  width: 4px;
  height: 19px;
  border-radius: 2px;
  background: #8a8a8a;
`;

type ArrangeProps = { track: string; icon: ReactNode; boxed?: boolean; volume: number; at: number; fill?: boolean; children?: ReactNode };
const ArrangeArea = ({ track, icon, boxed, volume, at, fill, children }: ArrangeProps) => (
  <Arrange $fill={fill}>
    <HeaderColumn>
      <HeaderTools>
        <Cluster>
          <SmallButton aria-label="Add track">
            <Icon name="plus" size={8} />
          </SmallButton>
        </Cluster>
        <Cluster>
          <SmallButton aria-label="Duplicate track">
            <Icon name="duplicate" size={9} />
          </SmallButton>
        </Cluster>
        <Cluster $ml="auto">
          <SmallButton aria-label="Track header components">
            <Icon name="panel" />
          </SmallButton>
        </Cluster>
      </HeaderTools>
      <TrackHeader>
        <TrackNumber>1</TrackNumber>
        <TrackIcon $boxed={boxed}>
          <span>
            {boxed && <Icon name="right" size={8} />}
            {icon}
          </span>
        </TrackIcon>
        <TrackInfo>
          <p>{track}</p>
          <TrackControls>
            <TrackButton>M</TrackButton>
            <TrackButton>S</TrackButton>
            <TrackButton $color="#a8452c" $ml={3}>
              R
            </TrackButton>
            <TrackButton $color={boxed ? "#b06c34" : "#93a53c"}>I</TrackButton>
            <VolumeWrap>
              <Range $thumb={10} $line={10} defaultValue={volume} aria-label={`${track} volume`} />
            </VolumeWrap>
            <KnobRing $size={14} aria-label={`${track} pan`} />
          </TrackControls>
        </TrackInfo>
      </TrackHeader>
    </HeaderColumn>
    <TimelineColumn>
      <Timeline>
        <Ruler>
          {Array.from({ length: 10 }, (_, i) => (
            <RulerCell key={i} $cycle={i < 2}>
              <b>{i * 2 + 1}</b>
              <RulerTicks>
                {Array.from({ length: 8 }, (_, t) => (
                  <RulerTick key={t} $tall={t === 4} />
                ))}
              </RulerTicks>
            </RulerCell>
          ))}
        </Ruler>
        <Lane>
          {Array.from({ length: 20 }, (_, i) => (
            <LaneBar key={i}>{i === 0 && children}</LaneBar>
          ))}
        </Lane>
        {!fill && <LaneGap />}
        {!fill && <ArrangeRail />}
        <Playhead $at={at} $top={11}>
          <PlayheadCap color="#b4b4b4" edge="#b4b4b4" />
        </Playhead>
      </Timeline>
      <BottomScroll $h={fill ? 4 : 9}>
        <span />
      </BottomScroll>
    </TimelineColumn>
  </Arrange>
);

/* ---------- piano roll ---------- */

const Editor = styled.section`
  display: flex;
  flex-direction: column;
  flex: 1;
  border-top: 1px solid ${c.focus};
  border-left: 1px solid ${c.focus};
`;

const Tabs = styled.div`
  display: grid;
  grid-template-columns: repeat(3, 72px);
  align-self: center;
  height: 12px;
  margin: 3px 0 4px;
  border-radius: 3px;
  background: #3d3d3d;
`;

const Tab = styled.button<{ $on?: boolean }>`
  border-radius: 3px;
  background: ${(p) => (p.$on ? c.blue : "transparent")};
  color: ${(p) => (p.$on ? "#fff" : "#c4c4c4")};
  font-weight: 500;
`;

const PositionReadout = styled.output`
  width: 70px;
  height: 11px;
  margin-left: 31px;
  border-radius: 3px;
  background: #3d3d3d;
  color: #b4b4b4;
  line-height: 11px;
  text-align: center;
  white-space: pre;
`;

const EditorTop = styled.div`
  display: grid;
  grid-template-columns: 183px 1fr;
  height: 24px;
`;

const SelectionInfo = styled.div`
  display: flex;
  align-items: center;
  justify-content: space-between;
  padding: 0 4px 0 5px;
  font-size: 6px;
  color: #b8b8b8;
  strong {
    display: block;
    color: #eee;
    font-size: 7px;
    font-weight: 600;
  }
`;

const EditorRuler = styled.div`
  display: flex;
  flex-direction: column;
  padding: 0 14px 0 6px;
  border-left: 1px solid #2a2a2a;
  background: linear-gradient(#595959 11px, #3a3a3a 11px);
`;

const BeatNumbers = styled.div`
  display: grid;
  grid-template-columns: repeat(4, 1fr) 0;
  height: 12px;
  border-bottom: 1px solid #2a2a2a;
  line-height: 10px;
  white-space: nowrap;
  font-weight: 500;
  > span:first-child {
    border-left: 1px solid #777;
    padding-left: 1px;
  }
  > span:last-child {
    padding-left: 3px;
  }
`;

const RegionStrip = styled.div`
  position: relative;
  display: grid;
  grid-template-columns: repeat(16, 1fr);
  align-items: end;
  height: 12px;
  border-radius: 2px 2px 0 0;
  background: #d6fccf;
  > i {
    height: 4px;
    border-left: 1px solid #a3cf9c;
  }
`;

const RegionLabel = styled.span`
  position: absolute;
  top: 1px;
  left: 3px;
  display: flex;
  align-items: center;
  gap: 4px;
  color: #3d5a38;
  font-size: 6px;
  font-weight: 500;
`;

const Roll = styled.div`
  display: grid;
  grid-template-columns: 104px 13px 66px 1fr 7px;
  flex: 1;
  overflow: hidden;
`;

const QuantizePanel = styled.div`
  background: #5c5c5c;
`;

const PanelSection = styled.div<{ $h: number }>`
  display: flex;
  flex-direction: column;
  height: ${(p) => p.$h}px;
  padding: 5px 11px 0 10px;
  border-bottom: 1px solid #515151;
  color: #c4c4c4;
  font-weight: 500;
  &:last-child {
    border-bottom: 0;
  }
`;

const PanelLine = styled.div<{ $h: number; $between?: boolean }>`
  display: flex;
  align-items: center;
  justify-content: ${(p) => (p.$between ? "space-between" : "flex-start")};
  gap: 5px;
  height: ${(p) => p.$h}px;
  > output {
    color: #eee;
    font-weight: 600;
  }
`;

const QButton = styled.button`
  width: 18px;
  height: 11px;
  border-radius: 3px;
  background: #6a6a6a;
  color: #eee;
  font-weight: 600;
`;

const PanelPick = styled.span`
  display: flex;
  color: #eee;
  > span {
    background: #6a6a6a;
  }
`;

const Scrolled = styled.div`
  margin-top: -25px;
`;

const Octave = styled.div<{ $short?: boolean }>`
  display: grid;
  grid-auto-rows: 1fr;
  height: ${(p) => (p.$short ? 36 : 109)}px;
`;

const KeyRow = styled.div<{ $edge?: boolean }>`
  display: flex;
  justify-content: flex-end;
  min-height: 0;
  border-bottom: ${(p) => (p.$edge ? "1px solid #777" : "0")};
  background: #dadada;
  color: #333;
  font-size: 6px;
  font-weight: 600;
  line-height: 9px;
  padding-right: ${(p) => (p.$edge ? 1 : 0)}px;
`;

const BlackKey = styled.span<{ $lit?: boolean }>`
  width: 6px;
  margin-right: auto;
  background: ${(p) => (p.$lit ? "#45599a" : "#1e1e1e")};
`;

const KeySplit = styled.span`
  width: 7px;
  height: 5px;
  border-bottom: 1px solid #777;
`;

const NameRow = styled.div`
  min-height: 0;
  padding-left: 2px;
  background: #232323;
  color: #8e8e8e;
  font-size: 6px;
  line-height: 10px;
  white-space: nowrap;
`;

const PitchRow = styled.div<{ $black?: boolean }>`
  min-height: 0;
  background: ${(p) => (p.$black ? "#232323" : "#2d2d2d")};
`;

const NoteArea = styled.div`
  position: relative;
  margin-left: 2px;
`;

const NoteCanvas = styled.div`
  position: absolute;
  inset: 0 7px 0 4px;
  display: grid;
  grid-template-columns: repeat(16, 1fr);
  border-left: 1px solid #4f8a44;
  border-right: 1px solid #35502f;
  > i {
    border-left: 1px solid rgba(255, 255, 255, 0.07);
  }
`;

const Note = styled.button<{ $step: number; $row: number; $selected?: boolean }>`
  position: absolute;
  top: calc(109px * ${(p) => p.$row} / 12);
  left: calc(100% * ${(p) => p.$step} / 16);
  width: calc(100% / 16 - 1px);
  height: 9px;
  padding-left: 2px;
  justify-content: flex-start;
  border: 1px solid ${(p) => (p.$selected ? "#a6cf76" : "#84a853")};
  background: ${(p) => (p.$selected ? "#e6ffcb" : "#8fb45c")};
  &::before {
    content: "";
    width: 65%;
    height: 1px;
    background: ${(p) => (p.$selected ? "#8fae6c" : "#d3ec9e")};
  }
`;

const RollRail = styled.div`
  display: flex;
  justify-content: flex-end;
  background: #3a3a3a;
  > span {
    width: 4px;
    height: 95px;
    margin-top: 155px;
    margin-right: 1px;
    border-radius: 2px;
    background: #777;
  }
`;

const blackRows = [1, 3, 5, 8, 10];
const octaves = [
  { label: "C3", rows: 12 },
  { label: "C2", rows: 12 },
  { label: "C1", rows: 12 },
  { label: "C0", rows: 4 },
];
const sampleNames = [
  "Tape Loop FX 9 - A...",
  "Tape Loop FX 8 - A...",
  "Tape Loop FX 7 - A...",
  "Tape Loop FX 6 - A...",
  "Tape Loop FX 5 - A...",
  "Hi-Hat 2 - Autumn L...",
  "Tape Loop FX 4 - A...",
  "Tape Loop FX 3 - A...",
  "Bass 2 - Autumn Le...",
  "Hi-Hat 1 - Autumn L...",
  "Bass 1 - Autumn Le...",
  "Tape Loop FX 2 - A...",
  "Tape Loop FX 1 - Au...",
  "Snare - Autumn Lea...",
  "Electric Guitar - Aut...",
  "Kick - Autumn Leaves",
];
const notes = [
  { step: 0, row: 6 },
  { step: 2, row: 11 },
  { step: 4, row: 22, selected: true },
  { step: 6, row: 8 },
  { step: 7, row: 22 },
];

const OctaveStack = ({ cell }: { cell: (octave: number, row: number) => ReactNode }) => (
  <Scrolled>
    {octaves.map((o, oi) => (
      <Octave key={o.label} $short={o.rows < 12}>
        {Array.from({ length: o.rows }, (_, r) => (
          <React.Fragment key={r}>{cell(oi, r)}</React.Fragment>
        ))}
      </Octave>
    ))}
  </Scrolled>
);

const LabeledRange = ({ label, value }: { label: string; value: number }) => {
  const id = useId();
  return (
    <>
      <PanelLine $h={13} $between>
        <label htmlFor={id}>{label}</label>
        <output htmlFor={id}>{value}</output>
      </PanelLine>
      <PanelLine $h={12}>
        <Range id={id} $thumb={12} defaultValue={label === "Velocity" ? 62 : value} />
      </PanelLine>
    </>
  );
};

const PianoRoll = () => {
  const snap = useId();
  return (
    <Editor>
      <Tabs role="tablist">
        <Tab role="tab" aria-selected="true" $on>
          Piano Roll
        </Tab>
        <Tab role="tab" aria-selected="false">
          Score
        </Tab>
        <Tab role="tab" aria-selected="false">
          Smart Tempo
        </Tab>
      </Tabs>
      <PaneBar $h={23}>
        <Cluster>
          <Menus />
        </Cluster>
        <Cluster $ml="7px">
          <SmallButton aria-label="Collapse mode">
            <Icon name="collapse" size={9} />
          </SmallButton>
        </Cluster>
        <Cluster $ml="6px">
          <SmallButton aria-label="Automation">
            <Icon name="automation" />
          </SmallButton>
        </Cluster>
        <Cluster $ml="6px">
          <SmallButton aria-label="MIDI in">
            <Icon name="midiIn" size={11} />
          </SmallButton>
          <SmallButton $on={c.green} aria-label="MIDI out">
            <Icon name="midiOut" size={11} />
          </SmallButton>
        </Cluster>
        <Cluster $ml="5px">
          <SmallButton $on={c.blue} aria-label="Catch playhead">
            <Icon name="catch" />
          </SmallButton>
        </Cluster>
        <Cluster $ml="6px">
          <SmallButton $on="#ab8a34" aria-label="Link">
            <Icon name="link" />
          </SmallButton>
        </Cluster>
        <Cluster $ml="auto">
          <SmallButton $w={24} aria-label="Pointer tool">
            <Icon name="pointer" size={9} />
            <Icon name="down" size={6} />
          </SmallButton>
          <SmallButton $w={24} aria-label="Pencil tool">
            <Icon name="pencil" size={9} />
            <Icon name="down" size={6} />
          </SmallButton>
        </Cluster>
        <PositionReadout>{"B1   1  1  1  1"}</PositionReadout>
        <BarLabel htmlFor={snap} $ml="6px">
          Snap:
        </BarLabel>
        <Pick id={snap} value="Smart" w={99} />
        <Cluster $ml="6px">
          <SmallButton $on={c.blue} aria-label="Fit horizontally">
            <Icon name="hzoom" size={9} />
          </SmallButton>
        </Cluster>
        <Zooms v={58} h={78} />
      </PaneBar>
      <EditorTop>
        <SelectionInfo>
          <p>
            <strong>One Note selected</strong>
            in Autumn Leaves
          </p>
          <Cluster>
            <SmallButton aria-label="Show event panel">
              <Icon name="panel" />
            </SmallButton>
          </Cluster>
        </SelectionInfo>
        <EditorRuler>
          <BeatNumbers>
            {["1", "1 2", "1 3", "1 4", "2"].map((n) => (
              <span key={n}>{n}</span>
            ))}
          </BeatNumbers>
          <RegionStrip>
            {Array.from({ length: 16 }, (_, i) => (
              <i key={i} />
            ))}
            <RegionLabel>
              <Icon name="region" size={8} />
              Autumn Leaves
            </RegionLabel>
            <Playhead $at={40.6} $top={0} $bottom={-340}>
              <PlayheadCap color="#f4f4f4" edge="#a8b8a4" />
            </Playhead>
          </RegionStrip>
        </EditorRuler>
      </EditorTop>
      <Roll>
        <QuantizePanel>
          <PanelSection $h={95}>
            <PanelLine $h={12}>Time Quantize (classic)</PanelLine>
            <PanelLine $h={12}>
              <PanelPick>
                <Pick label="Time quantize" value="1/16 Note" w={59} />
              </PanelPick>
              <QButton>Q</QButton>
            </PanelLine>
            <PanelLine $h={3} />
            <LabeledRange label="Strength" value={100} />
            <PanelLine $h={3} />
            <LabeledRange label="Swing" value={50} />
          </PanelSection>
          <PanelSection $h={51}>
            <PanelLine $h={12}>Scale Quantize</PanelLine>
            <PanelLine $h={12}>
              <PanelPick>
                <Pick label="Scale root" value="Off" w={30} />
              </PanelPick>
              <PanelPick>
                <Pick label="Scale type" value="..." w={24} />
              </PanelPick>
              <QButton>Q</QButton>
            </PanelLine>
            <PanelLine $h={20} as="label">
              <Tick disabled />
              Snap To Scale
            </PanelLine>
          </PanelSection>
          <PanelSection $h={40}>
            <LabeledRange label="Velocity" value={80} />
          </PanelSection>
        </QuantizePanel>
        <OctaveStack
          cell={(o, r) => (
            <KeyRow $edge={r === 11 || r === 6}>
              {blackRows.includes(r) ? (
                <>
                  <BlackKey $lit={o === 1 && r === 10} />
                  <KeySplit />
                </>
              ) : (
                r === 11 && octaves[o].label
              )}
            </KeyRow>
          )}
        />
        <OctaveStack cell={(o, r) => <NameRow>{sampleNames[o * 12 + r - 20]}</NameRow>} />
        <NoteArea>
          <OctaveStack cell={(_, r) => <PitchRow $black={blackRows.includes(r)} />} />
          <Scrolled as={NoteCanvas}>
            {Array.from({ length: 16 }, (_, i) => (
              <i key={i} />
            ))}
            {notes.map((n) => (
              <Note
                key={`${n.step}`}
                $step={n.step}
                $row={n.row}
                $selected={n.selected}
                aria-label={`Note at step ${n.step + 1}`}
              />
            ))}
          </Scrolled>
        </NoteArea>
        <RollRail>
          <span />
        </RollRail>
      </Roll>
    </Editor>
  );
};

/* ---------- windows ---------- */

const ControlBar = ({ stopped, beat, pencil }: { stopped?: boolean; beat: number; pencil?: boolean }) => (
  <MainBar>
    <ToolGroup>
      <ToolButton $on aria-label="Library">
        <Icon name="library" size={12} />
      </ToolButton>
      <ToolButton $on aria-label="Inspector">
        <Icon name="inspector" size={11} />
      </ToolButton>
      <ToolButton aria-label="Quick help">
        <Icon name="help" size={11} />
      </ToolButton>
      <ToolButton aria-label="Toolbar">
        <Icon name="tray" size={12} />
      </ToolButton>
    </ToolGroup>
    <ToolGroup $ml={13}>
      <ToolButton aria-label="Smart controls">
        <Icon name="dial" size={12} />
      </ToolButton>
      <ToolButton aria-label="Mixer">
        <Icon name="mixer" size={11} />
      </ToolButton>
      <ToolButton $on={pencil} aria-label="Editors">
        <Icon name="pencil" size={11} />
      </ToolButton>
    </ToolGroup>
    <Spring $grow={2} />
    <ToolGroup>
      <ToolButton $w={20} $color="#444" aria-label={stopped ? "Stop" : "Go to beginning"}>
        <Icon name={stopped ? "stop" : "start"} size={11} />
      </ToolButton>
      <ToolButton $w={20} $color="#444" aria-label="Play">
        <Icon name="play" size={10} />
      </ToolButton>
      <ToolButton $w={20} $color="#c4472d" aria-label="Record">
        <Icon name="record" size={11} />
      </ToolButton>
      <ToolButton $w={20} $color="#c4472d" aria-label="Capture recording">
        <Icon name="capture" size={11} />
      </ToolButton>
      <ToolButton $w={20} $color={stopped ? "#8a8280" : "#bb7566"} aria-label="Replace">
        <Icon name="replace" size={10} />
      </ToolButton>
      <ToolButton $w={20} $color="#444" aria-label="Cycle">
        <Icon name="cycle" size={12} />
      </ToolButton>
    </ToolGroup>
    <Lcd>
      <LcdCell>
        <LcdDigits>
          <LcdDim>00</LcdDim>1
        </LcdDigits>
        <LcdLabel>BAR</LcdLabel>
      </LcdCell>
      <LcdCell>
        <LcdDigits>{beat}</LcdDigits>
        <LcdLabel>BEAT</LcdLabel>
      </LcdCell>
      <LcdCell>
        120
        <LcdKeep>KEEP</LcdKeep>
        <LcdLabel>TEMPO</LcdLabel>
      </LcdCell>
      <LcdCell>
        <span>4/4</span>
        <span>Cmaj</span>
      </LcdCell>
      <LcdSelect aria-label="Display mode">
        <Icon name="down" size={8} />
      </LcdSelect>
    </Lcd>
    <ToolGroup>
      <ToolButton aria-label="Replace mode">
        <Icon name="shield" size={11} />
      </ToolButton>
      <ToolButton $color="#7c7c7c" aria-label="Tuner">
        <Icon name="fork" size={11} />
      </ToolButton>
      <ToolButton aria-label="Solo">
        <Icon name="solo" size={10} />
      </ToolButton>
    </ToolGroup>
    <ToolGroup $ml={13}>
      <PurpleButton>1234</PurpleButton>
      <PurpleButton $w={18} aria-label="Metronome">
        <Icon name="metronome" size={11} />
      </PurpleButton>
    </ToolGroup>
    <Spring $grow={1} />
    <LevelBar />
    <Spring $grow={1} />
    <ToolGroup>
      <ToolButton aria-label="List editors">
        <Icon name="list" size={11} />
      </ToolButton>
      <ToolButton aria-label="Note pads">
        <Icon name="note" size={11} />
      </ToolButton>
      <ToolButton aria-label="Loop browser">
        <Icon name="loop" size={11} />
      </ToolButton>
      <ToolButton aria-label="Browsers">
        <Icon name="browser" size={14} />
      </ToolButton>
    </ToolGroup>
  </MainBar>
);

type InspectorProps = { region: string; track: string; rows: ParamRow[]; strips: StripProps[] };
const Inspector = ({ region, track, rows, strips }: InspectorProps) => (
  <InspectorPane>
    <SectionHead>
      <Icon name="down" size={8} />
      Region: <Strong>{region}</Strong>
    </SectionHead>
    <Params>
      {rows.slice(0, 5).map((r) => (
        <ParamLine key={r.label} row={r} />
      ))}
      <Param>
        <Dots>-&nbsp; -</Dots>
      </Param>
      {rows.slice(5).map((r) => (
        <ParamLine key={r.label} row={r} />
      ))}
      <MoreToggle>
        <Icon name="right" size={6} />
        More
      </MoreToggle>
    </Params>
    <SectionHead>
      <Icon name="right" size={8} />
      Track: <Strong>&nbsp;{track}</Strong>
    </SectionHead>
    <Strips>
      {strips.map((s) => (
        <ChannelStrip key={s.name} {...s} />
      ))}
    </Strips>
  </InspectorPane>
);

const RegionDots = () => (
  <svg width="25" height="24" viewBox="0 0 25 24" fill="#c9efbb" aria-hidden="true">
    <rect x="2" y="7" width="2" height="1" />
    <rect x="8" y="4" width="2" height="1" />
    <rect x="5" y="20" width="2" height="1" />
    <rect x="10" y="20" width="2" height="1" />
  </svg>
);

const App = () => (
  <>
    <GlobalStyle />
    <Page>
      <WindowFrame>
        <ControlBar beat={2} pencil />
        <Body>
          <Library
            art={<DrumMachine width={82} height={73} />}
            patch="Autumn Leaves"
            category="Electronic Drums"
            thumb={153}
            patches={[
              "Absolute Zero",
              "Agogo Funk",
              "Analog Drive",
              "Analog Haze",
              "Autumn Leaves",
              "Blowing Speakers",
              "Burlington",
              "Chopped Up",
              "Chrome",
              "CR-78 Made Iconic",
              "Dark Arts",
              "Dark Secrets",
              "Dembow",
              "Doing Science",
              "Empty Kit",
              "Festival Drop",
              "Future Flex",
              "Grimey Funk",
              "H-Town Fire",
              "Hard Bass House",
              "Hillsborough",
              "Hit Synth",
              "Hybrid Knock",
            ]}
          />
          <Inspector
            region="Autumn Leaves"
            track="Autumn Leaves"
            rows={[
              { label: "Mute:", kind: "check" },
              { label: "Loop:", kind: "check" },
              { label: "Quantize", kind: "pick", bold: true },
              { label: "Q-Swing:", kind: "text", dim: true },
              { label: "Transpose:", kind: "stepper" },
              { label: "Pitch Source:", kind: "pick" },
              { label: "Velocity Offset:", kind: "text" },
            ]}
            strips={[
              {
                name: "Autumn Leaves",
                setting: "Autumn Le...",
                selected: true,
                instrument: "DMD",
                peak: "-23,6",
                peakColor: "#8fd389",
              },
              { name: "Stereo Out", setting: "Setting", peak: "-0,9", peakColor: "#d6c04a" },
            ]}
          />
          <TracksPane>
            <TracksBar caught v={78} h={10} />
            <ArrangeArea
              track="Autumn Leaves"
              icon={<DrumMachine width={18} height={16} />}
              boxed
              volume={72}
              at={2}
            >
              <Region>
                <span>Autumn</span>
                <RegionDots />
              </Region>
            </ArrangeArea>
            <PianoRoll />
          </TracksPane>
        </Body>
      </WindowFrame>

      <WindowFrame $front>
        <TitleBar>
          <Lights>
            <Light $color="#c9523c" aria-label="Close" />
            <Light $color="#d9b23c" aria-label="Minimize" />
            <Light $color="#7fb24c" aria-label="Zoom" />
          </Lights>
          <WindowTitle>
            <DocIcon />
            Untitled - Tracks
          </WindowTitle>
        </TitleBar>
        <ControlBar stopped beat={1} />
        <Body>
          <Library
            art={<StagePiano width={82} height={73} />}
            patch="Deluxe Classic"
            category="Electric Piano"
            folder="Processed"
            patches={[
              "Bright Suitcase",
              "Classic Suitcase Mk IV",
              "Deluxe Classic",
              "Deluxe Modern",
              "Wide Suitcase",
              "Wurlitzer Classic",
              "Wurlitzer Modern",
              "Processed",
            ]}
          />
          <Inspector
            region="MIDI Defaults"
            track="Deluxe Classic"
            rows={[
              { label: "Mute:", kind: "check", dim: true },
              { label: "Loop:", kind: "check" },
              { label: "Quantize", kind: "pick", bold: true },
              { label: "Q-Swing:", kind: "text" },
              { label: "Transpose:", kind: "stepper" },
              { label: "Pitch Source:", kind: "pick", dim: true },
              { label: "Velocity Offset:", kind: "text" },
            ]}
            strips={[
              { name: "Deluxe Classic", setting: "Deluxe Cla...", selected: true, midi: true, instrument: "E-Piano" },
              { name: "Stereo Out", setting: "Setting", midi: true },
            ]}
          />
          <TracksPane $focus>
            <TracksBar v={40} h={10} />
            <ArrangeArea track="Deluxe Classic" icon={<StagePiano width={17} height={15} />} volume={73} at={0} fill />
          </TracksPane>
        </Body>
      </WindowFrame>
    </Page>
  </>
);

export default App;
